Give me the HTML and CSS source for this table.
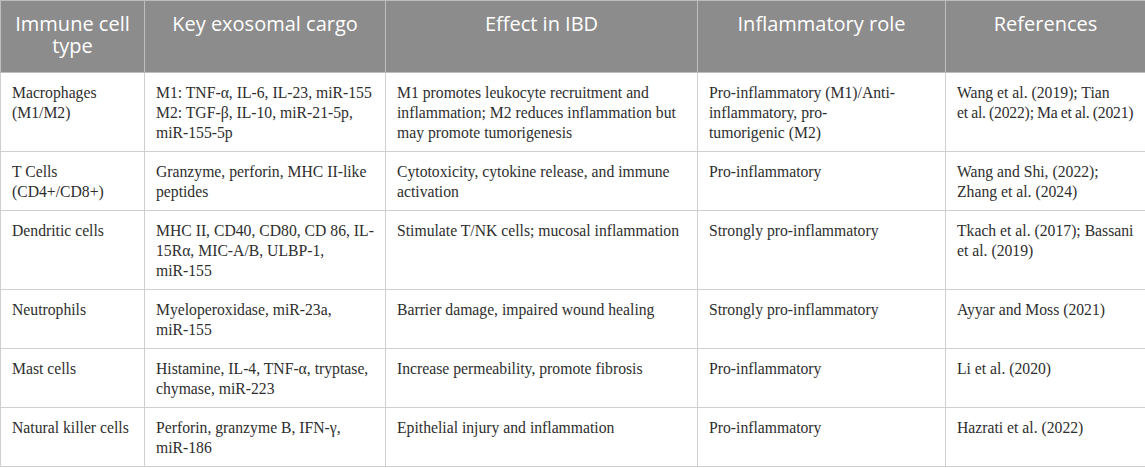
FILE: index.html
```html
<!DOCTYPE html>
<html>
<head>
<meta charset="utf-8">
<link rel="stylesheet" href="styles.css">
</head>
<body>
<table class="tbl">
  <colgroup>
    <col class="c1"><col class="c2"><col class="c3"><col class="c4"><col class="c5">
  </colgroup>
  <thead>
    <tr>
      <th>Immune cell type</th>
      <th>Key exosomal cargo</th>
      <th>Effect in IBD</th>
      <th>Inflammatory role</th>
      <th>References</th>
    </tr>
  </thead>
  <tbody>
    <tr>
      <td>Macrophages (M1/M2)</td>
      <td>M1: TNF-α, IL-6, IL-23, <span class="nb">miR-155</span> M2: TGF-β, IL-10, <span class="nb">miR-21-5p,</span> <span class="nb">miR-155-5p</span></td>
      <td>M1 promotes leukocyte recruitment and inflammation; M2 reduces inflammation but may promote tumorigenesis</td>
      <td>Pro-inflammatory (M1)/Anti-inflammatory, pro-<br>tumorigenic (M2)</td>
      <td>Wang et al. (2019); Tian<br><span class="tight">et al. (2022); Ma et al. (2021)</span></td>
    </tr>
    <tr>
      <td>T Cells (CD4+/CD8+)</td>
      <td>Granzyme, perforin, MHC II-like peptides</td>
      <td>Cytotoxicity, cytokine release, and immune activation</td>
      <td>Pro-inflammatory</td>
      <td>Wang and Shi, (2022); Zhang et al. (2024)</td>
    </tr>
    <tr>
      <td>Dendritic cells</td>
      <td>MHC II, CD40, CD80, CD 86, IL-15Rα, MIC-A/B, ULBP-1, <span class="nb">miR-155</span></td>
      <td>Stimulate T/NK cells; mucosal inflammation</td>
      <td>Strongly pro-inflammatory</td>
      <td>Tkach et al. (2017); Bassani et al. (2019)</td>
    </tr>
    <tr>
      <td>Neutrophils</td>
      <td>Myeloperoxidase, <span class="nb">miR-23a,</span> <span class="nb">miR-155</span></td>
      <td>Barrier damage, impaired wound healing</td>
      <td>Strongly pro-inflammatory</td>
      <td>Ayyar and Moss (2021)</td>
    </tr>
    <tr>
      <td>Mast cells</td>
      <td>Histamine, IL-4, TNF-α, tryptase, chymase, <span class="nb">miR-223</span></td>
      <td>Increase permeability, promote fibrosis</td>
      <td>Pro-inflammatory</td>
      <td>Li et al. (2020)</td>
    </tr>
    <tr>
      <td>Natural killer cells</td>
      <td>Perforin, granzyme B, IFN-γ, <span class="nb">miR-186</span></td>
      <td>Epithelial injury and inflammation</td>
      <td>Pro-inflammatory</td>
      <td>Hazrati et al. (2022)</td>
    </tr>
  </tbody>
</table>
</body>
</html>
```
FILE: styles.css
```css
html, body {
  margin: 0;
  padding: 0;
  background: #ffffff;
}

.tbl {
  width: 1145px;
  border-collapse: collapse;
  table-layout: fixed;
}

.c1 { width: 144px; }
.c2 { width: 241px; }
.c3 { width: 312px; }
.c4 { width: 248px; }
.c5 { width: 200px; }

.tbl th {
  background: #8c8c8c;
  color: #ffffff;
  font-family: "Open Sans", "Noto Sans", sans-serif;
  font-weight: normal;
  font-size: 20px;
  line-height: 22px;
  text-align: center;
  vertical-align: top;
  padding: 12px 11px 15px;
  border: 1px solid #bdbdbd;
  height: 44px;
}

.tbl td {
  font-family: "Liberation Serif", "DejaVu Serif", serif;
  font-size: 15.7px;
  line-height: 20px;
  color: #2e2e2e;
  vertical-align: top;
  padding: 10px 8px 8px 11px;
  border: 1px solid #cfcfcf;
}

.nb {
  white-space: nowrap;
}

.tight {
  letter-spacing: -0.2px;
  word-spacing: -0.5px;
  white-space: nowrap;
}
```
